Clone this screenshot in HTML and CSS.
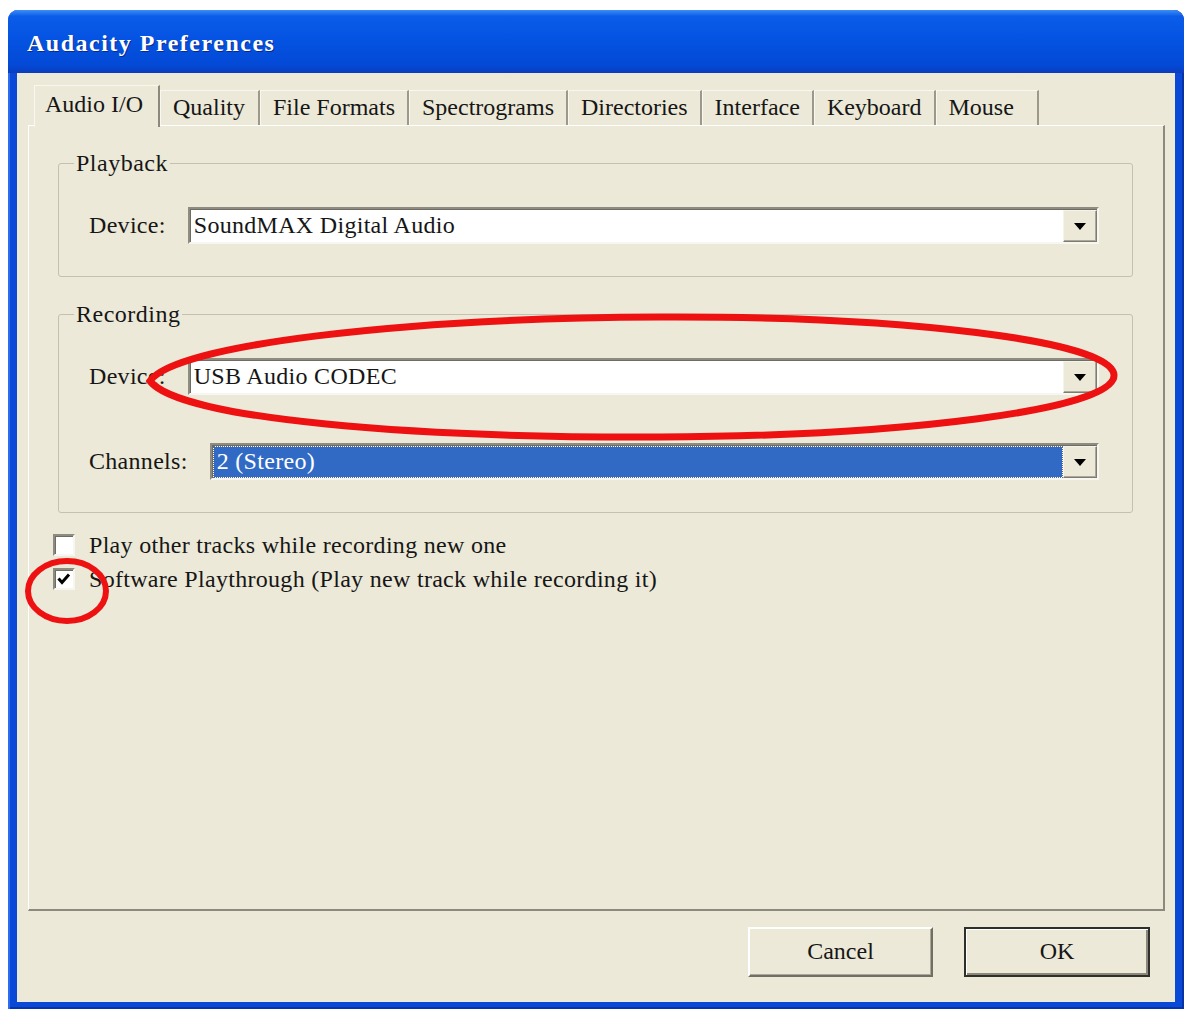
FILE: index.html
```html
<!DOCTYPE html>
<html lang="en">
<head>
<meta charset="UTF-8">
<title>Audacity Preferences</title>
<link rel="stylesheet" href="styles.css">
</head>
<body>
<div class="window">
<div class="titlebar"><span class="title">Audacity Preferences</span></div>
<div class="client">
<div class="tabs">
<div class="tab active">Audio I/O</div>
<div class="tab">Quality</div>
<div class="tab">File Formats</div>
<div class="tab">Spectrograms</div>
<div class="tab">Directories</div>
<div class="tab">Interface</div>
<div class="tab">Keyboard</div>
<div class="tab">Mouse</div>
</div>

<div class="panel">
<fieldset class="group">
<legend>Playback</legend>
<div class="group-body">
<div class="row">
<span class="label">Device:</span>
<div class="combo"><span class="combo-text">SoundMAX Digital Audio</span><span class="combo-btn"><i class="arrow"></i></span></div>
</div>
</div>
</fieldset>

<fieldset class="group recording">
<legend>Recording</legend>
<div class="group-body">
<div class="row">
<span class="label">Device:</span>
<div class="combo"><span class="combo-text">USB Audio CODEC</span><span class="combo-btn"><i class="arrow"></i></span></div>
</div>
<div class="row">
<span class="label">Channels:</span>
<div class="combo focus"><span class="combo-text">2 (Stereo)</span><span class="combo-btn"><i class="arrow"></i></span></div>
</div>
</div>
</fieldset>

<div class="checks">
<div class="check"><span class="box"></span>Play other tracks while recording new one</div>
<div class="check"><span class="box"><svg width="18" height="18" viewBox="0 0 18 18"><path d="M3.5 8.5 L7 12.5 L14 4.5" fill="none" stroke="#000" stroke-width="3"/></svg></span>Software Playthrough (Play new track while recording it)</div>
</div>
</div>

<div class="buttons">
<button class="btn">Cancel</button>
<button class="btn default">OK</button>
</div>
</div>
</div>

<!-- red marks drawn over the screenshot -->
<svg class="marks" width="1190" height="1009" viewBox="0 0 1190 1009">
<path d="M150 381 C 175 345, 400 318, 660 317 C 900 316, 1112 340, 1114 375 C 1116 410, 900 436, 660 437 C 420 438, 180 420, 150 381 Z" fill="none" stroke="#ee1111" stroke-width="7"/>
<ellipse cx="67" cy="591" rx="39" ry="30" fill="none" stroke="#ee1111" stroke-width="6"/>
</svg>
</body>
</html>
```
FILE: styles.css
```css
html {
overflow: hidden;
}

body {
margin: 0;
padding: 10px 0 0 8px;
background: #fff;
font-family: "Liberation Serif", "Times New Roman", serif;
color: #161616;
letter-spacing: 0.3px;
position: relative;
}

.window {
width: 1176px;
height: 999px;
box-sizing: border-box;
padding: 0 9px 7px;
background: #0a48d8;
border-radius: 10px 10px 0 0;
display: flex;
flex-direction: column;
box-shadow: inset 2px 0 #2b6cf0, inset -2px 0 #0634a8, inset 0 -2px #0634a8;
}

.titlebar {
height: 63px;
flex: none;
margin: 0 -9px;
padding: 4px 0 0 19px;
box-sizing: border-box;
display: flex;
align-items: center;
border-radius: 10px 10px 0 0;
background: linear-gradient(#3d8ef6 0, #0b5ce9 10%, #0553e2 45%, #0349d6 88%, #0a3cbc 100%);
}

.title {
color: #fff;
font-weight: bold;
font-size: 24px;
letter-spacing: 1.5px;
text-shadow: 1px 1px #0a2a8c;
}

.client {
flex: 1;
display: flex;
flex-direction: column;
background: #ece9d8;
padding: 12px 10px 25px 11px;
}

.tabs {
display: flex;
align-items: flex-end;
height: 40px;
margin-left: 6px;
position: relative;
z-index: 1;
letter-spacing: 0;
}

.tab {
height: 35px;
min-width: 100px;
box-sizing: border-box;
padding: 0 12px;
font-size: 24px;
line-height: 32px;
white-space: nowrap;
border-top: 1px solid #f8f7f1;
border-left: 1px solid #f8f7f1;
border-right: 2px solid #9c998b;
}

.tab:last-child {
min-width: 103px;
}

.tab.active {
height: 42px;
margin-bottom: -2px;
padding: 0 15px 0 10px;
line-height: 36px;
background: #ece9d8;
border-right-color: #8d8a7d;
}

.panel {
flex: 1;
border-style: solid;
border-width: 1px 2px 2px 1px;
border-color: #fff #8d8a7d #8d8a7d #fff;
padding: 23px 30px 0 24px;
}

.group {
margin: 0 0 0 5px;
padding: 0;
min-inline-size: auto;
border: 1px solid #c4c1b0;
border-radius: 3px;
}

.group legend {
margin-left: 15px;
padding: 0 2px;
font-size: 24px;
line-height: 28px;
letter-spacing: 0.5px;
}

.recording {
margin-top: 23px;
}

.group-body {
padding: 30px 33px 32px 30px;
display: flex;
flex-direction: column;
gap: 48px;
}

.row {
display: flex;
align-items: center;
gap: 22px;
}

.label {
font-size: 24px;
white-space: nowrap;
}

.combo {
flex: 1;
height: 37px;
box-sizing: border-box;
display: flex;
background: #fff;
border: 2px solid;
border-color: #8e8c80 #f7f6f1 #f7f6f1 #8e8c80;
box-shadow: inset 1px 1px #6f6d63;
}

.combo-text {
flex: 1;
padding-left: 4px;
font-size: 24px;
line-height: 32px;
white-space: nowrap;
}

.combo.focus .combo-text {
margin: 2px 1px 1px 2px;
padding-left: 3px;
line-height: 28px;
background: #316ac5;
color: #fff;
outline: 1px dotted #5d6b86;
}

.combo-btn {
width: 34px;
flex: none;
box-sizing: border-box;
display: flex;
align-items: center;
justify-content: center;
margin: 1px 0 0 0;
background: #ece9d8;
border: 1px solid;
border-color: #f4f3ec #7e7b6f #7e7b6f #f4f3ec;
box-shadow: inset -1px -1px #aca899;
}

.arrow {
width: 0;
height: 0;
border-left: 6px solid transparent;
border-right: 6px solid transparent;
border-top: 7px solid #000;
}

.checks {
margin-top: 15px;
}

.check {
display: flex;
align-items: center;
gap: 14px;
height: 34px;
font-size: 24px;
white-space: nowrap;
}

.box {
width: 22px;
height: 22px;
flex: none;
box-sizing: border-box;
background: #fff;
border: 2px solid;
border-color: #8e8c80 #f7f6f1 #f7f6f1 #8e8c80;
box-shadow: inset 1px 1px #6f6d63;
display: flex;
align-items: center;
justify-content: center;
}

.buttons {
display: flex;
justify-content: flex-end;
gap: 31px;
margin-top: 16px;
padding-right: 15px;
}

.btn {
width: 185px;
height: 50px;
padding-bottom: 3px;
font-family: "Liberation Serif", "Times New Roman", serif;
font-size: 24px;
color: #161616;
background: #ece9d8;
border: 2px solid;
border-color: #fff #716f64 #716f64 #fff;
box-shadow: inset -1px -1px #aca899;
}

.btn.default {
width: 186px;
border: 2px solid #2e2e2a;
box-shadow: inset 1px 1px #fff, inset -2px -2px #8b887b;
}

.marks {
position: absolute;
left: 0;
top: 0;
pointer-events: none;
}
```
